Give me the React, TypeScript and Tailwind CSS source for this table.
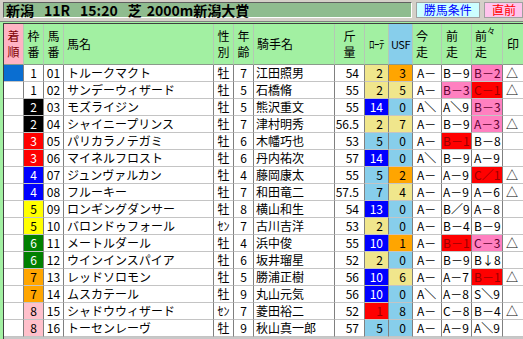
import React from "react";

type CK = "K" | "S" | "B" | "R" | "O" | "P" | "W";

const cellColor: Record<CK, string> = {
  K: "bg-[#f0e68c] text-black",
  S: "bg-[#87ceeb] text-black",
  B: "bg-[#0000ff] text-white",
  R: "bg-[#ff0000] text-[#990000]",
  O: "bg-[#ffa500] text-black",
  P: "bg-[#ff80c0] text-[#600030]",
  W: "bg-white text-black",
};

const frameColor: Record<string, string> = {
  "1": "bg-white text-black",
  "2": "bg-black text-white",
  "3": "bg-[#ff0000] text-white",
  "4": "bg-[#0000ff] text-white",
  "5": "bg-[#ffff00] text-black",
  "6": "bg-[#008000] text-white",
  "7": "bg-[#ffa500] text-black",
  "8": "bg-[#ffc0cb] text-black",
};

type Row = {
  f: string;
  n: string;
  name: string;
  s: string;
  a: string;
  j: string;
  k: string;
  r: [string, CK];
  u: [string, CK];
  i: string;
  z1: [string, CK];
  z2: [string, CK];
  m: string;
  first?: boolean;
};

const rows: Row[] = [
  { f: "1", n: "01", name: "トルークマクト", s: "牡", a: "7", j: "江田照男", k: "54", r: ["2", "K"], u: ["3", "O"], i: "A－", z1: ["B－9", "W"], z2: ["B－2", "P"], m: "△", first: true },
  { f: "1", n: "02", name: "サンデーウィザード", s: "牡", a: "5", j: "石橋脩", k: "55", r: ["2", "K"], u: ["5", "K"], i: "A－", z1: ["B－3", "P"], z2: ["C－1", "R"], m: "△" },
  { f: "2", n: "03", name: "モズライジン", s: "牡", a: "5", j: "熊沢重文", k: "55", r: ["14", "B"], u: ["0", "S"], i: "A＼", z1: ["A＼9", "W"], z2: ["B－3", "P"], m: "" },
  { f: "2", n: "04", name: "シャイニープリンス", s: "牡", a: "7", j: "津村明秀", k: "56.5", r: ["2", "K"], u: ["7", "K"], i: "A－", z1: ["B－9", "W"], z2: ["A－3", "P"], m: "△" },
  { f: "3", n: "05", name: "パリカラノテガミ", s: "牡", a: "6", j: "木幡巧也", k: "53", r: ["5", "S"], u: ["0", "S"], i: "A－", z1: ["B－1", "R"], z2: ["B－8", "W"], m: "" },
  { f: "3", n: "06", name: "マイネルフロスト", s: "牡", a: "6", j: "丹内祐次", k: "57", r: ["14", "B"], u: ["0", "S"], i: "A＼", z1: ["B－9", "W"], z2: ["A－9", "W"], m: "" },
  { f: "4", n: "07", name: "ジュンヴァルカン", s: "牡", a: "4", j: "藤岡康太", k: "55", r: ["5", "S"], u: ["2", "O"], i: "A－", z1: ["A－9", "W"], z2: ["C／1", "R"], m: "△" },
  { f: "4", n: "08", name: "フルーキー", s: "牡", a: "7", j: "和田竜二", k: "57.5", r: ["7", "S"], u: ["4", "K"], i: "A－", z1: ["A－9", "W"], z2: ["A－6", "W"], m: "△" },
  { f: "5", n: "09", name: "ロンギングダンサー", s: "牡", a: "8", j: "横山和生", k: "54", r: ["13", "B"], u: ["0", "S"], i: "A－", z1: ["B／9", "W"], z2: ["A－8", "W"], m: "" },
  { f: "5", n: "10", name: "バロンドゥフォール", s: "ｾﾝ", a: "7", j: "古川吉洋", k: "53", r: ["2", "K"], u: ["0", "S"], i: "A－", z1: ["B－4", "W"], z2: ["B－9", "W"], m: "" },
  { f: "6", n: "11", name: "メートルダール", s: "牡", a: "4", j: "浜中俊", k: "55", r: ["10", "B"], u: ["1", "O"], i: "A－", z1: ["B－1", "R"], z2: ["C－3", "P"], m: "△" },
  { f: "6", n: "12", name: "ウインインスパイア", s: "牡", a: "6", j: "坂井瑠星", k: "52", r: ["2", "K"], u: ["0", "S"], i: "A－", z1: ["B－9", "W"], z2: ["B↓8", "W"], m: "" },
  { f: "7", n: "13", name: "レッドソロモン", s: "牡", a: "5", j: "勝浦正樹", k: "56", r: ["10", "B"], u: ["6", "K"], i: "A－", z1: ["A－7", "W"], z2: ["B－1", "R"], m: "△" },
  { f: "7", n: "14", name: "ムスカテール", s: "牡", a: "9", j: "丸山元気", k: "56", r: ["10", "B"], u: ["0", "S"], i: "A＼", z1: ["A－8", "W"], z2: ["S＼9", "W"], m: "" },
  { f: "8", n: "15", name: "シャドウウィザード", s: "ｾﾝ", a: "7", j: "菱田裕二", k: "52", r: ["1", "R"], u: ["8", "S"], i: "A－", z1: ["C－8", "W"], z2: ["B－4", "W"], m: "△" },
  { f: "8", n: "16", name: "トーセンレーヴ", s: "牡", a: "9", j: "秋山真一郎", k: "57", r: ["5", "S"], u: ["0", "S"], i: "A－", z1: ["A－9", "W"], z2: ["A＼9", "W"], m: "" },
];

const D = "h-[17px] border-r border-b border-r-[#808080] border-b-[#c4c4c4] leading-[16px] whitespace-nowrap overflow-hidden";
const H = "h-[41px] border-r border-b border-r-[#b4c8b4] border-b-[#8a9a8a] bg-[#a2f0a2] text-black flex items-center";

function Stack({ a, b, cls = "" }: { a: React.ReactNode; b: React.ReactNode; cls?: string }) {
  return (
    <div className={`flex flex-col leading-[16px] ${cls}`}>
      <span>{a}</span>
      <span>{b}</span>
    </div>
  );
}

export default function App() {
  return (
    <div className="w-[523px] h-[339px] overflow-hidden bg-[#d4d0c8] font-['Noto_Sans_CJK_JP','Noto_Sans',sans-serif] text-[12px] text-black flex flex-col">
      {/* top bar */}
      <div className="h-[21px] flex items-start pt-[2px] pl-[3px] gap-[4px] shrink-0">
        <div className="w-[421px] h-[16px] bg-[#8fbc8f] border border-t-[#606060] border-l-[#606060] border-r-white border-b-white flex items-center pl-[2px] text-[14px] font-bold leading-[14px]">
          <span>新潟</span>
          <span className="ml-[10px]">11R</span>
          <span className="ml-[10px]">15:20</span>
          <span className="ml-[10px]">芝</span>
          <span className="ml-[5px]">2000m新潟大賞</span>
        </div>
        <div className="w-[66px] h-[16px] bg-[#ccffff] border border-[#a0a0a0] text-[#0000ff] flex items-center justify-center leading-[14px]">
          勝馬条件
        </div>
        <div className="w-[40px] h-[16px] bg-[#ffc4ec] border border-[#a0a0a0] text-[#ff0000] flex items-center pl-[7px] leading-[14px]">
          直前
        </div>
      </div>
      {/* table area */}
      <div className="flex-1 flex border-t border-[#808080] bg-[#a2f0a2] pt-[1px]">
        <div className="w-[3px] shrink-0" />
        <div className="flex-1 bg-[#c8c8c8] border-l border-t border-[#404040] overflow-hidden">
          <div className="grid grid-cols-[20px_20px_20px_150px_20px_20px_81px_30px_24px_24px_29px_30px_31px_30px] w-[529px]">
            {/* header */}
            <div className={`${H} !bg-[#ffb4c4] justify-center`}>
              <Stack a="着" b="順" cls="text-[#800000]" />
            </div>
            <div className={`${H} justify-center`}>
              <Stack a="枠" b="番" />
            </div>
            <div className={`${H} justify-center`}>
              <Stack a="馬" b="番" />
            </div>
            <div className={`${H} pl-[3px]`}>馬名</div>
            <div className={`${H} justify-center`}>
              <Stack a="性" b="別" />
            </div>
            <div className={`${H} justify-center`}>
              <Stack a="年" b="齢" />
            </div>
            <div className={`${H} pl-[3px]`}>騎手名</div>
            <div className={`${H} justify-center`}>
              <Stack a="斤" b="量" />
            </div>
            <div className={`${H} justify-center text-[11px] tracking-[-0.5px]`}>ﾛｰﾃ</div>
            <div className={`${H} !bg-[#87ceeb] justify-center text-[11px] tracking-[-0.5px]`}>USF</div>
            <div className={`${H} pl-[3px]`}>
              <Stack a="今" b="走" />
            </div>
            <div className={`${H} pl-[4px]`}>
              <Stack a="前" b="走" />
            </div>
            <div className={`${H} pl-[3px]`}>
              <Stack
                a={
                  <span className="flex items-start">
                    前<span className="text-[8px] leading-[8px] mt-[-1px]">々</span>
                  </span>
                }
                b="走"
              />
            </div>
            <div className={`${H} pl-[4px] border-r-0`}>印</div>

            {/* rows */}
            {rows.map((r) => (
              <React.Fragment key={r.n}>
                <div className={`${D} ${r.first ? "bg-[#0a6ed1]" : "bg-white"}`} />
                <div className={`${D} ${frameColor[r.f]} text-center`}>{r.f}</div>
                <div className={`${D} bg-white text-center`}>{r.n}</div>
                <div className={`${D} bg-white pl-[3px]`}>{r.name}</div>
                <div className={`${D} bg-white text-center`}>{r.s}</div>
                <div className={`${D} bg-white text-center`}>{r.a}</div>
                <div className={`${D} bg-white pl-[2px]`}>{r.j}</div>
                <div className={`${D} bg-white text-right pr-[5px]`}>{r.k}</div>
                <div className={`${D} ${cellColor[r.r[1]]} text-right pr-[5px]`}>{r.r[0]}</div>
                <div className={`${D} ${cellColor[r.u[1]]} text-right pr-[6px]`}>{r.u[0]}</div>
                <div className={`${D} bg-white pl-[4px]`}>{r.i}</div>
                <div className={`${D} ${cellColor[r.z1[1]]} pl-[1px]`}>{r.z1[0]}</div>
                <div className={`${D} ${cellColor[r.z2[1]]} pl-[2px]`}>{r.z2[0]}</div>
                <div className={`${D} bg-white pl-[3px] border-r-0`}>{r.m}</div>
              </React.Fragment>
            ))}
          </div>
        </div>
      </div>
    </div>
  );
}
